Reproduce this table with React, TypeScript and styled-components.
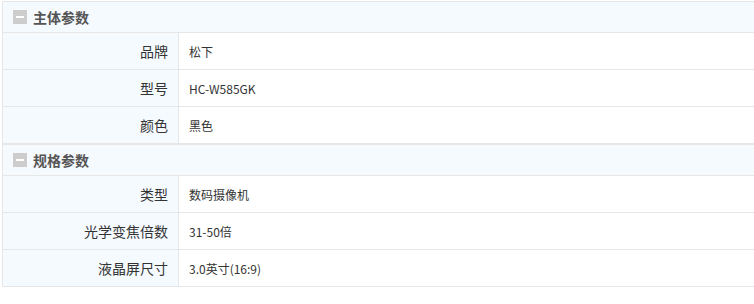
import React from "react";
import styled, { createGlobalStyle } from "styled-components";

const GlobalStyle = createGlobalStyle`
  html, body { margin: 0; padding: 0; background: #fff; }
  body {
    font-family: "Noto Sans CJK SC", "Noto Sans", sans-serif;
    color: #333;
  }
`;

const Page = styled.div`
  padding: 1px 0 0 2px;
`;

const Table = styled.div`
  width: 751px;
  border-left: 1px solid #e6e6e6;
`;

const Group = styled.section`
  border-top: 1px solid #e6e6e6;
`;

const GroupHeader = styled.div`
  height: 30px;
  display: flex;
  align-items: center;
  gap: 6px;
  padding-left: 10px;
  background: #f5faff;
  border-bottom: 1px solid #e6e6e6;
  font-size: 14px;
  font-weight: bold;
  color: #555;
`;

const Toggle = styled.span`
  width: 14px;
  height: 14px;
  background: #cdcdcd;
  display: flex;
  align-items: center;
  justify-content: center;
  &::after {
    content: "";
    width: 8px;
    height: 2px;
    background: #fff;
  }
`;

const Row = styled.div`
  display: grid;
  grid-template-columns: 176px 1fr;
  height: 36px;
  border-bottom: 1px solid #e6e6e6;
`;

const Label = styled.div`
  background: #f5faff;
  border-right: 1px solid #e6e6e6;
  display: flex;
  align-items: center;
  justify-content: flex-end;
  padding-right: 10px;
  font-size: 14px;
  color: #333;
`;

const Value = styled.div`
  display: flex;
  align-items: center;
  padding-left: 10px;
  font-size: 12px;
  color: #333;
`;

const groups = [
  {
    title: "主体参数",
    rows: [
      ["品牌", "松下"],
      ["型号", "HC-W585GK"],
      ["颜色", "黑色"],
    ],
  },
  {
    title: "规格参数",
    rows: [
      ["类型", "数码摄像机"],
      ["光学变焦倍数", "31-50倍"],
      ["液晶屏尺寸", "3.0英寸(16:9)"],
    ],
  },
];

export default function App() {
  return (
    <>
      <GlobalStyle />
      <Page>
        <Table>
          {groups.map((g) => (
            <Group key={g.title}>
              <GroupHeader>
                <Toggle />
                {g.title}
              </GroupHeader>
              {g.rows.map(([k, v]) => (
                <Row key={k}>
                  <Label>{k}</Label>
                  <Value>{v}</Value>
                </Row>
              ))}
            </Group>
          ))}
        </Table>
      </Page>
    </>
  );
}
